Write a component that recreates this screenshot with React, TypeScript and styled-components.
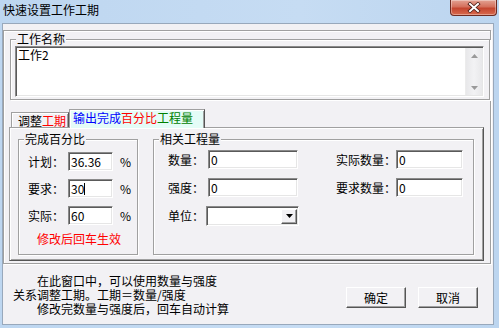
import React from 'react';
import styled, { createGlobalStyle } from 'styled-components';

const Global = createGlobalStyle`
  html, body { margin: 0; padding: 0; background: #fff; }
  body {
    font-family: "Noto Sans CJK SC", "Liberation Sans", sans-serif;
    font-size: 12px;
    color: #000;
  }
  * { box-sizing: border-box; }
`;

const Window = styled.div`
  width: 499px;
  height: 328px;
  display: flex;
  flex-direction: column;
  background: linear-gradient(90deg, #bdd6f0 0%, #c6dcf3 60%, #bcd5ef 100%);
  overflow: hidden;
`;

const TitleBar = styled.div`
  height: 23px;
  flex: none;
  display: flex;
  align-items: flex-start;
  justify-content: space-between;
  padding: 0 2px 0 3px;
`;

const TitleText = styled.span`
  margin-top: 3px;
  line-height: 14px;
  font-size: 12px;
  color: #000;
`;

const CloseButton = styled.div`
  width: 47px;
  height: 16px;
  display: flex;
  align-items: center;
  justify-content: center;
  border: 1px solid #6e2a20;
  border-top: none;
  border-radius: 0 0 4px 4px;
  background: linear-gradient(180deg, #e3a293 0%, #d4705c 45%, #c4452f 55%, #d86a4e 100%);
  box-shadow: inset 0 0 0 1px rgba(255, 255, 255, 0.35);
`;

const Client = styled.div`
  flex: 1;
  margin: 0 5px 3px 2px;
  background: #f2f1f4;
  border: 1px solid #98a8bb;
  display: flex;
  flex-direction: column;
`;

const OuterPanel = styled.div`
  margin: 6px 2px 0 0;
  height: 234px;
  border: 1px solid #a0a0a0;
  box-shadow: inset 1px 1px 0 #fff, 1px 1px 0 #fff;
  padding: 2px 1px 0 6px;
  display: flex;
  flex-direction: column;
`;

const Group = styled.fieldset<{ $w: number; $h: number }>`
  margin: 0;
  width: ${(p) => p.$w}px;
  height: ${(p) => p.$h}px;
  min-inline-size: 0;
  border: 1px solid #a0a0a0;
  box-shadow: inset 1px 1px 0 #fff, 1px 1px 0 #fff;
  padding: 1px 5px 2px 4px;
  flex: none;
`;

const Legend = styled.legend`
  padding: 0 1px;
  margin-left: 1px;
  font-size: 12px;
  line-height: 12px;
  background: #f2f1f4;
`;

const TextBox = styled.div`
  width: 469px;
  height: 51px;
  display: flex;
  background: #fff;
  border: 1px solid;
  border-color: #8a8a8a #fff #fff #8a8a8a;
  box-shadow: inset 1px 1px 0 #5a5a5a, inset -1px -1px 0 #e6e6e6;
`;

const TextContent = styled.div`
  flex: 1;
  padding: 1px 0 0 2px;
  line-height: 14px;
`;

const ScrollBar = styled.div`
  width: 17px;
  margin: 1px 1px 1px 0;
  background: linear-gradient(90deg, #e8e8ea 0%, #f2f2f4 50%, #e8e8ea 100%);
  border-left: 1px solid #ececec;
  display: flex;
  flex-direction: column;
  justify-content: space-between;
  align-items: center;
  padding: 6px 0 5px;
`;

const TabStrip = styled.div`
  margin: 9px 0 0 0;
  height: 18px;
  display: flex;
  align-items: flex-end;
  padding-left: 1px;
  position: relative;
  z-index: 1;
`;

const Tab = styled.div<{ $active?: boolean }>`
  height: ${(p) => (p.$active ? 19 : 15)}px;
  margin-bottom: ${(p) => (p.$active ? -1 : 0)}px;
  padding: ${(p) => (p.$active ? '1px 0 0 3px' : '1px 0 0 6px')};
  width: ${(p) => (p.$active ? 136 : 58)}px;
  background: ${(p) => (p.$active ? '#e4fcf7' : '#f2f1f4')};
  border-top: 1px solid #a0a0a0;
  border-left: 1px solid #a0a0a0;
  border-right: 1px solid #555;
  box-shadow: inset 1px 1px 0 #fff, inset -1px 0 0 #a0a0a0;
  line-height: 13px;
  font-size: 12px;
  white-space: nowrap;
`;

const C = styled.span<{ $c: string }>`
  color: ${(p) => p.$c};
`;

const TabPanel = styled.div`
  width: 475px;
  height: 134px;
  margin-left: -1px;
  border: 1px solid;
  border-color: #a0a0a0 #555 #555 #a0a0a0;
  box-shadow: inset 1px 1px 0 #fff, inset -1px -1px 0 #a0a0a0;
  padding: 5px 0 0 8px;
  display: flex;
  gap: 15px;
`;

const Rows = styled.div`
  display: flex;
  flex-direction: column;
  gap: 8px;
  padding: 6px 0 0 5px;
`;

const Row = styled.div`
  display: flex;
  align-items: center;
  height: 19px;
`;

const Label = styled.span<{ $w: number }>`
  width: ${(p) => p.$w}px;
  flex: none;
  white-space: nowrap;
  line-height: 14px;
`;

const Input = styled.div<{ $w: number }>`
  width: ${(p) => p.$w}px;
  height: 19px;
  flex: none;
  background: #fff;
  border: 1px solid;
  border-color: #8a8a8a #fff #fff #8a8a8a;
  box-shadow: inset 1px 1px 0 #5a5a5a, inset -1px -1px 0 #e6e6e6;
  padding: 1px 0 0 2px;
  line-height: 15px;
  white-space: nowrap;
`;

const Caret = styled.span`
  display: inline-block;
  width: 1px;
  height: 12px;
  background: #000;
  vertical-align: -1px;
`;

const Percent = styled.span`
  margin-left: 7px;
  line-height: 14px;
`;

const Note = styled.div`
  margin: 7px 0 0 14px;
  color: #ff0000;
  line-height: 14px;
`;

const Grid = styled.div`
  display: grid;
  grid-template-columns: 40px 90px 38px 60px 67px;
  grid-auto-rows: 19px;
  row-gap: 9px;
  align-items: center;
  padding: 4px 0 0 10px;
`;

const Select = styled.div`
  width: 93px;
  height: 20px;
  margin-left: -2px;
  display: flex;
  justify-content: flex-end;
  background: #fff;
  border: 1px solid;
  border-color: #8a8a8a #fff #fff #8a8a8a;
  box-shadow: inset 1px 1px 0 #5a5a5a, inset -1px -1px 0 #e6e6e6;
  padding: 2px 1px 1px 0;
`;

const DropButton = styled.div`
  width: 16px;
  display: flex;
  align-items: center;
  justify-content: center;
  background: #f2f1f4;
  border: 1px solid;
  border-color: #fff #555 #555 #fff;
  box-shadow: inset -1px -1px 0 #a0a0a0;
`;

const Bottom = styled.div`
  flex: 1;
  display: flex;
  align-items: flex-start;
`;

const Notes = styled.div`
  flex: 1;
  padding: 10px 0 0 10px;
  line-height: 14px;
  white-space: pre;
`;

const Buttons = styled.div`
  display: flex;
  gap: 12px;
  margin: 23px 15px 0 0;
`;

const Button = styled.div`
  width: 60px;
  height: 21px;
  display: flex;
  align-items: center;
  justify-content: center;
  background: #f2f1f4;
  border: 1px solid;
  border-color: #fff #555 #555 #fff;
  box-shadow: inset -1px -1px 0 #a0a0a0;
  line-height: 14px;
`;

const UpArrow = () => (
  <svg width="7" height="4" viewBox="0 0 7 4">
    <path d="M3.5 0 L7 4 L0 4 Z" fill="#9a9a9a" />
  </svg>
);
const DownArrow = ({ color = '#9a9a9a' }: { color?: string }) => (
  <svg width="7" height="4" viewBox="0 0 7 4">
    <path d="M0 0 L7 0 L3.5 4 Z" fill={color} />
  </svg>
);

const NOTES = '\u3000\u3000在此窗口中，可以使用数量与强度\n关系调整工期。工期＝数量/强度\n\u3000\u3000修改完数量与强度后，回车自动计算';

export default function App() {
  return (
    <>
      <Global />
      <Window>
        <TitleBar>
          <TitleText>快速设置工作工期</TitleText>
          <CloseButton>
            <svg width="14" height="11" viewBox="0 0 14 11">
              <path d="M3 2 L11 9 M11 2 L3 9" stroke="#4a1a14" strokeWidth="3.6" strokeLinecap="square" />
              <path d="M3 2 L11 9 M11 2 L3 9" stroke="#fff" strokeWidth="2" strokeLinecap="square" />
            </svg>
          </CloseButton>
        </TitleBar>
        <Client>
          <OuterPanel>
            <Group $w={480} $h={67}>
              <Legend>工作名称</Legend>
              <TextBox>
                <TextContent>工作2</TextContent>
                <ScrollBar>
                  <UpArrow />
                  <DownArrow />
                </ScrollBar>
              </TextBox>
            </Group>
            <TabStrip>
              <Tab>
                调整<C $c="#ff0000">工期</C>
              </Tab>
              <Tab $active>
                <C $c="#0000ff">输出完成</C>
                <C $c="#ff0000">百分比</C>
                <C $c="#008000">工程量</C>
              </Tab>
            </TabStrip>
            <TabPanel>
              <Group $w={120} $h={122}>
                <Legend>完成百分比</Legend>
                <Rows>
                  <Row>
                    <Label $w={40}>计划：</Label>
                    <Input $w={45}>36.36</Input>
                    <Percent>%</Percent>
                  </Row>
                  <Row>
                    <Label $w={40}>要求：</Label>
                    <Input $w={45}>
                      30<Caret />
                    </Input>
                    <Percent>%</Percent>
                  </Row>
                  <Row>
                    <Label $w={40}>实际：</Label>
                    <Input $w={45}>60</Input>
                    <Percent>%</Percent>
                  </Row>
                </Rows>
                <Note>修改后回车生效</Note>
              </Group>
              <Group $w={321} $h={122}>
                <Legend>相关工程量</Legend>
                <Grid>
                  <Label $w={40}>数量：</Label>
                  <Input $w={90}>0</Input>
                  <span />
                  <Label $w={60}>实际数量：</Label>
                  <Input $w={67}>0</Input>
                  <Label $w={40}>强度：</Label>
                  <Input $w={90}>0</Input>
                  <span />
                  <Label $w={60}>要求数量：</Label>
                  <Input $w={67}>0</Input>
                  <Label $w={40}>单位：</Label>
                  <Select>
                    <DropButton>
                      <DownArrow color="#000" />
                    </DropButton>
                  </Select>
                </Grid>
              </Group>
            </TabPanel>
          </OuterPanel>
          <Bottom>
            <Notes>{NOTES}</Notes>
            <Buttons>
              <Button>确定</Button>
              <Button>取消</Button>
            </Buttons>
          </Bottom>
        </Client>
      </Window>
    </>
  );
}
